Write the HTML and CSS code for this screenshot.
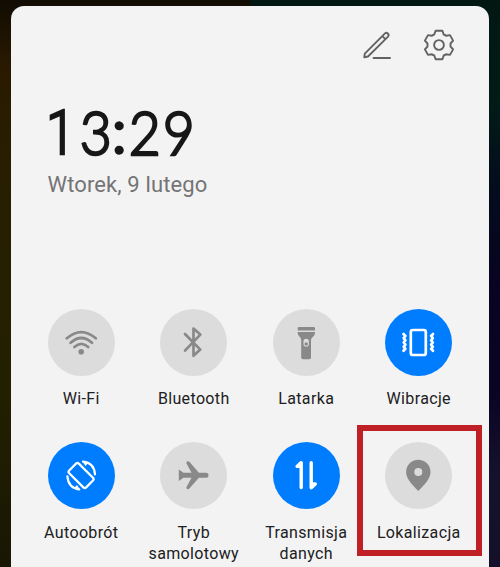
FILE: index.html
```html
<!DOCTYPE html>
<html lang="pl">
<head>
<meta charset="utf-8">
<title>Panel skrótów</title>
<link rel="stylesheet" href="styles.css">
</head>
<body>
<main class="panel">
  <header class="actions">
    <svg class="edit" width="30" height="30" viewBox="0 0 30 30"><path d="M2.3 27.2 2.8 23.6 23 3.4Q24.4 2.2 25.8 3.5 27.4 5 26 6.6L6 26.5ZM20.3 6.1 23.4 9.2M11.5 28H28"/></svg>
    <svg class="gear" width="32" height="32" viewBox="-16 -16 32 32"><path d="M-3.4 -14.3H3.4L4.7 -10.5Q6.4 -9.8 7.1 -9.2L11 -9.9 14.1 -4.4 11.5 -1.5V1.5L14.1 4.4 11 9.9 7.1 9.2Q6.4 9.8 4.7 10.5L3.4 14.3H-3.4L-4.7 10.5Q-6.4 9.8 -7.1 9.2L-11 9.9 -14.1 4.4 -11.5 1.5V-1.5L-14.1 -4.4 -11 -9.9 -7.1 -9.2Q-6.4 -9.8 -4.7 -10.5Z"/><circle r="4.9"/></svg>
  </header>
  <section class="clock">
    <div class="time"><span class="one">1</span><span class="three">3</span><span class="colon">:</span><span class="two">2</span><span class="nine">9</span></div>
    <div class="date">Wtorek, 9 lutego</div>
  </section>
  <section class="tiles">
    <div class="tile">
      <svg class="icon line" viewBox="0 0 67 67"><path d="M18.8 29.3Q33.3 16.8 47.8 29.3M22.6 33.8Q33.3 24.2 44 33.8M26.4 38Q33.3 31.8 40.2 38"/><circle class="solid" cx="33.2" cy="42.8" r="2.8"/></svg>
      <span class="label">Wi-Fi</span>
    </div>
    <div class="tile">
      <svg class="icon line" viewBox="0 0 67 67"><path d="M25 25 40.3 40.6 33.5 46.8V19.6L40.3 25.6 25 41.6"/></svg>
      <span class="label">Bluetooth</span>
    </div>
    <div class="tile">
      <svg class="icon" viewBox="0 0 67 67"><path class="solid" fill-rule="evenodd" d="M26 18H40.7Q42 18 42 19.3V21.5H24.7V19.3Q24.7 18 26 18ZM24.7 23H42V24Q42 26.5 39.8 28 38 29.3 38 31V48.5Q38 50.2 36.3 50.2H30Q28.2 50.2 28.2 48.5V31Q28.2 29.3 26.8 28 24.7 26.3 24.7 24ZM33.2 29.8A2.7 2.7 0 0 0 30.5 32.5V35A2.7 2.7 0 0 0 35.9 35V32.5A2.7 2.7 0 0 0 33.2 29.8Z"/><circle class="solid" cx="33.2" cy="35" r="1.7"/></svg>
      <span class="label">Latarka</span>
    </div>
    <div class="tile on">
      <svg class="icon line" viewBox="0 0 67 67"><rect x="25.8" y="21" width="15" height="25" rx="2"/><path d="M18.5 25 20.4 27 18.7 29.2 20.4 31.3 18.7 33.5 20.4 35.6 18.7 37.8 20.4 39.8 18.5 41.8M48 25 46.1 27 47.8 29.2 46.1 31.3 47.8 33.5 46.1 35.6 47.8 37.8 46.1 39.8 48 41.8"/></svg>
      <span class="label">Wibracje</span>
    </div>
    <div class="tile on">
      <svg class="icon line thin" viewBox="0 0 67 67"><rect x="26.3" y="21.5" width="13.6" height="24" rx="2" transform="rotate(-45 33.1 33.5)"/><path d="M35 19.7Q46 20.6 47 32.4M19.4 34.4Q20.4 46.2 31.2 47.3"/><path class="solid" d="M34 18.7 40 21.2 37.5 24ZM32.4 48.3 26.3 45.8 29 43Z"/></svg>
      <span class="label">Autoobrót</span>
    </div>
    <div class="tile">
      <svg class="icon" viewBox="0 0 67 67"><path class="solid" d="M18.8 27.5 23.5 30.8H31.5L26.4 21.2Q26 19.5 27.6 19.2 28.7 19 29.4 19.8L38.9 30.8H46A2.5 2.5 0 0 1 46 35.8H38.9L29.4 46.6Q28.7 47.4 27.6 47.2 26 46.7 26.4 45.2L31.5 35.8H23.5L18.8 39Z"/></svg>
      <span class="label">Tryb samolotowy</span>
    </div>
    <div class="tile on">
      <svg class="icon line data" viewBox="0 0 67 67"><path d="M28.2 45.6V20.6L24.1 24.4H28M38.2 20.8V45.8L42.3 41.9H38.4"/></svg>
      <span class="label">Transmisja danych</span>
    </div>
    <div class="tile">
      <svg class="icon" viewBox="0 0 67 67"><path class="solid" fill-rule="evenodd" d="M33.3 17.7A12.2 12.2 0 0 0 21.1 30C21.1 37.2 28.2 43.7 33.3 49 38.4 43.7 45.5 37.2 45.5 30A12.2 12.2 0 0 0 33.3 17.7ZM33.3 26A4 4 0 1 1 33.3 34 4 4 0 0 1 33.3 26Z"/></svg>
      <span class="label">Lokalizacja</span>
      <span class="highlight"></span>
    </div>
  </section>
</main>
</body>
</html>
```
FILE: styles.css
```css
* { box-sizing: border-box; }

body {
  margin: 0;
  height: 567px;
  padding: 6px 11px 0;
  overflow: hidden;
  font-family: Roboto, sans-serif;
  background:
    linear-gradient(#021712, #021b17 18%, #040d1c 32%, #080321 50%, #0b0524 70%, #17122c 85%, #14102a) right / 50% 100% no-repeat,
    linear-gradient(#110c03, #2a1a00 12%, #272000 35%, #222000 70%, #191604);
}

.panel {
  height: 561px;
  border-radius: 13px 13px 0 0;
  background: #f3f3f4;
}

.actions {
  display: flex;
  justify-content: flex-end;
  gap: 31px;
  padding: 23px 34px 0 0;
  height: 93px;
}

.actions svg {
  fill: none;
  stroke: #626263;
  stroke-width: 1.9;
  stroke-linejoin: round;
  stroke-linecap: round;
}

.edit { margin-top: 1px; }

.clock { padding-left: 36.5px; height: 209.5px; }

.time {
  display: flex;
  height: 73px;
  line-height: 65px;
  font-family: Lato, sans-serif;
  font-weight: 300;
  font-size: 62px;
  color: #171718;
  -webkit-text-stroke: 2.6px #171718;
}

.time span {
  flex: none;
  width: 33.5px;
  text-align: center;
  transform: scaleX(0.89);
}

.time .one {
  width: 30px;
  margin: 1.5px 3.5px 0 -3.5px;
  font-family: Roboto, sans-serif;
  font-size: 61px;
  transform: scaleX(0.85);
}

.time .three { width: 34px; }

.time .colon {
  width: 15.5px;
  margin-top: -2px;
  -webkit-text-stroke-width: 3.4px;
  transform: none;
}

.date {
  font-size: 22px;
  line-height: 26px;
  letter-spacing: 0.12px;
  color: #747475;
}

.tiles {
  display: grid;
  grid-template-columns: repeat(4, 112.5px);
  grid-template-rows: 133.5px auto;
  padding-left: 14px;
}

.tile {
  position: relative;
  display: flex;
  flex-direction: column;
  align-items: center;
  gap: 12.5px;
}

.icon {
  width: 67px;
  height: 67px;
  border-radius: 50%;
  background: #dcdcdd;
  color: #89898a;
}

.on .icon { background: #007dff; color: #fff; }

.line {
  fill: none;
  stroke: currentColor;
  stroke-width: 2.7;
  stroke-linecap: round;
  stroke-linejoin: round;
}

.thin { stroke-width: 2.2; }
.data { stroke-width: 3.4; }
.solid { fill: currentColor; stroke: none; }

.label {
  width: 100px;
  text-align: center;
  font-size: 16px;
  line-height: 21.5px;
  letter-spacing: 0.35px;
  color: #202021;
}

.highlight {
  position: absolute;
  top: -17px;
  left: -5.75px;
  width: 125px;
  height: 131px;
  border: 6px solid #be2025;
}
```
